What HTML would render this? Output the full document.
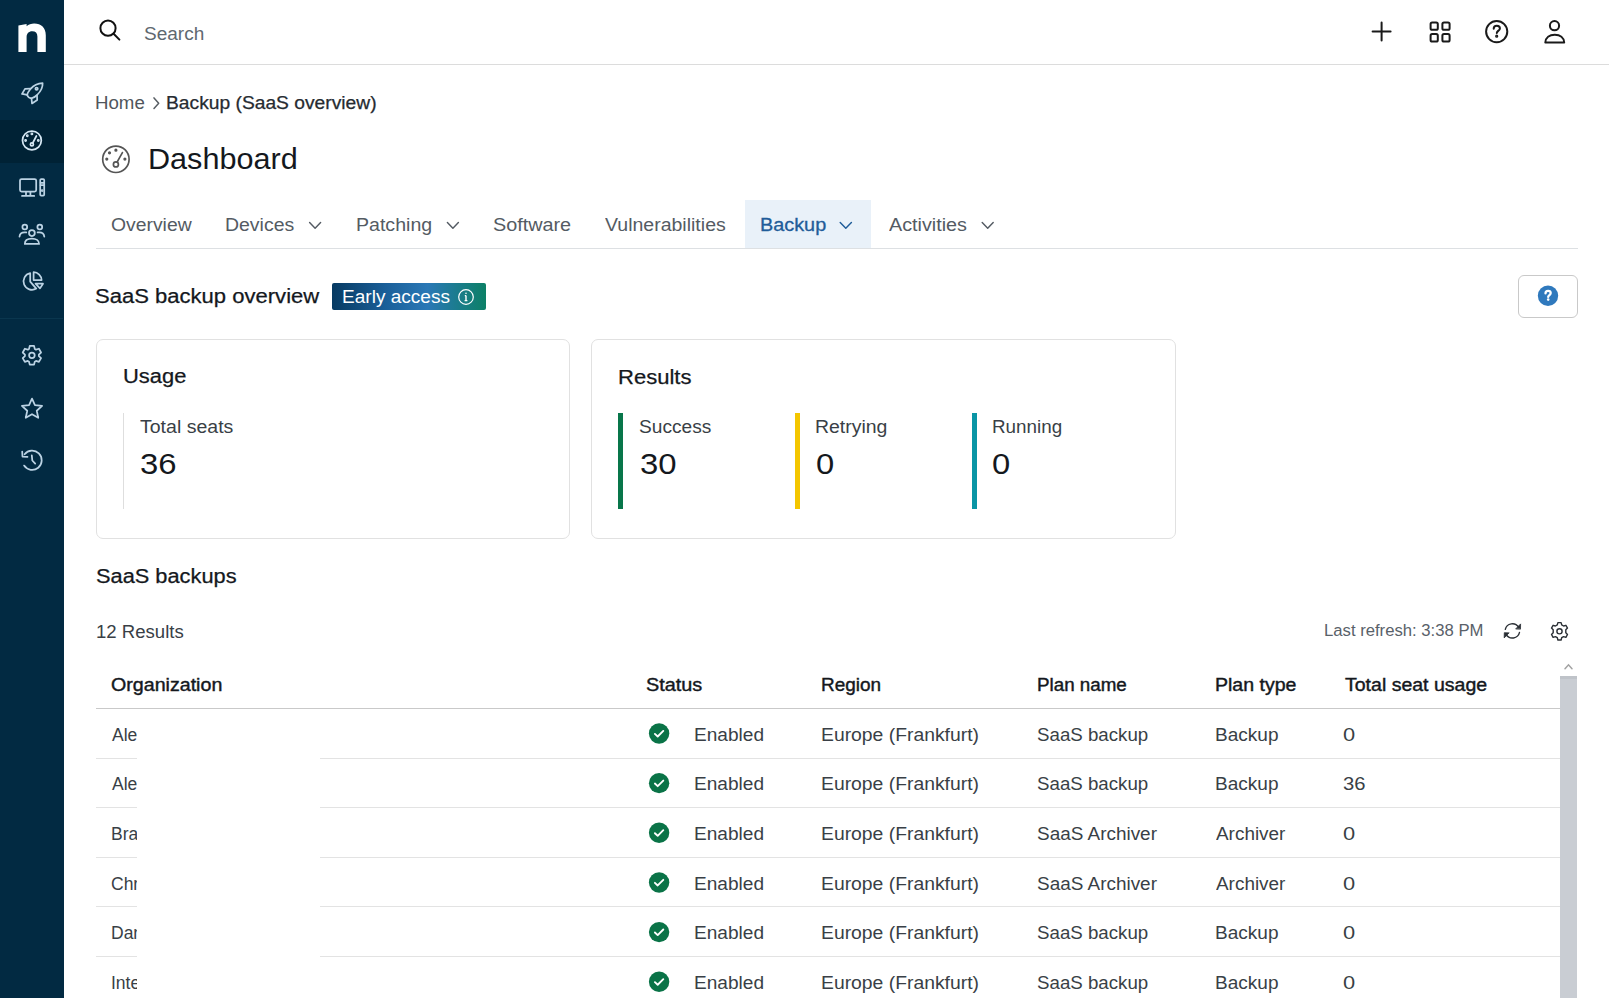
<!DOCTYPE html>
<html><head><meta charset="utf-8"><title>Dashboard</title>
<style>
html,body{margin:0;padding:0;}
body{width:1609px;height:998px;overflow:hidden;background:#ffffff;position:relative;font-family:"Liberation Sans",sans-serif;}
.t{position:absolute;white-space:nowrap;transform-origin:0 0;font-family:"Liberation Sans",sans-serif;}
.a{position:absolute;}
svg{position:absolute;overflow:visible;}
</style></head><body>
<!-- sidebar -->
<div class="a" style="left:0;top:0;width:64px;height:998px;background:#022a42"></div>
<div class="a" style="left:0;top:120px;width:64px;height:43px;background:#002235"></div>
<div class="a" style="left:0;top:318px;width:63px;height:1px;background:#0a364e"></div>
<svg style="left:0;top:0" width="64" height="64" viewBox="0 0 64 64">
 <path fill="#ffffff" d="M18.4 25.6 L26.6 23.9 L26.6 26.3 C28.6 24.6 31.2 23.6 34.2 23.6 C41.2 23.6 45.8 27.8 45.8 35.2 L45.8 52 L37.4 52 L37.4 36.4 C37.4 33.2 35.6 31.3 32.2 31.3 C28.7 31.3 26.6 33.6 26.6 37.2 L26.6 52 L18.4 52 Z"/>
</svg>
<svg style="left:0;top:64px" width="64" height="440" viewBox="0 64 64 440" fill="none" stroke="#bcd3e4" stroke-width="1.75" stroke-linecap="round" stroke-linejoin="round">
 <!-- rocket -->
 <path d="M42.6 83.1 C38 83.4 33.6 85.4 30.6 88.8 C28.7 91.2 27.4 93.3 27.1 95 C27.8 96.9 29.5 98.2 31.4 98.3 C33.1 98.1 35.1 96.9 37.1 95 C40.5 91.6 42.9 87.4 42.6 83.1 Z"/>
 <circle cx="36.6" cy="88.7" r="1.2"/>
 <path d="M30.4 88.6 L25 88.9 L22 93.9 L27.3 94.8"/>
 <path d="M37 95.3 L37.2 99.9 L32 103.4 L31.5 98.3"/>
 <!-- gauge -->
 <g stroke="#d6e8f4">
 <circle cx="31.9" cy="140.4" r="9.4"/>
 <circle cx="31.9" cy="144.4" r="1.5"/>
 <path d="M32.8 142.9 L36.4 136"/>
 <circle cx="27.3" cy="135.7" r="0.55" fill="#d6e8f4"/>
 <circle cx="31.9" cy="133.9" r="0.55" fill="#d6e8f4"/>
 <circle cx="25.6" cy="140.5" r="0.55" fill="#d6e8f4"/>
 <circle cx="38.3" cy="140.5" r="0.55" fill="#d6e8f4"/>
 </g>
 <!-- devices -->
 <rect x="20" y="179" width="16.2" height="12.6" rx="1.6"/>
 <path d="M26 191.8 L26 195.6 M30.4 191.8 L30.4 195.6 M22 195.9 L34.2 195.9"/>
 <rect x="40.2" y="179" width="4" height="16.6" rx="1"/>
 <path d="M40.6 182.8 L43.8 182.8 M40.6 185.2 L43.8 185.2"/>
 <circle cx="42.1" cy="190.6" r="0.5" fill="#bcd3e4"/>
 <!-- people -->
 <circle cx="24.8" cy="227" r="2.4"/>
 <circle cx="39.8" cy="227" r="2.4"/>
 <circle cx="31.9" cy="233.1" r="2.9"/>
 <path d="M19.5 236.6 C19.8 234 21.8 232.4 24.5 232.4 L26.3 232.4"/>
 <path d="M44.3 236.6 C44 234 42 232.4 39.3 232.4 L37.6 232.4"/>
 <path d="M24.8 243.9 C24.8 240.5 27.8 238.6 31.9 238.6 C36 238.6 39.1 240.5 39.1 243.9 Z"/>
 <!-- pie -->
 <path d="M30.2 273.2 A8.4 8.4 0 1 0 36.3 288.6 L30.2 281.6 Z"/>
 <path d="M33.6 272.2 A8 8 0 0 1 41.6 280.1 L33.6 280.1 Z"/>
 <path d="M35.5 283.7 L43 283.7 L40 288.4 Z"/>
 <!-- gear -->
 <path d="M29.05 348.91 L29.74 345.95 L34.06 345.95 L34.75 348.91 L36.01 349.64 L38.92 348.75 L41.08 352.49 L38.86 354.57 L38.86 356.03 L41.08 358.11 L38.92 361.85 L36.01 360.96 L34.75 361.69 L34.06 364.65 L29.74 364.65 L29.05 361.69 L27.79 360.96 L24.88 361.85 L22.72 358.11 L24.94 356.03 L24.94 354.57 L22.72 352.49 L24.88 348.75 L27.79 349.64 Z"/>
 <circle cx="31.9" cy="355.3" r="2.8"/>
 <!-- star -->
 <path d="M32.00 398.60 L34.94 405.15 L42.08 405.92 L36.76 410.75 L38.23 417.78 L32.00 414.20 L25.77 417.78 L27.24 410.75 L21.92 405.92 L29.06 405.15 Z"/>
 <!-- history -->
 <path d="M24.6 454.3 A9.6 9.6 0 1 1 24.1 465.6"/>
 <path d="M22.2 451.6 L22.5 456.6 L27.5 456.9"/>
 <path d="M31.8 455.4 L32.3 460.5 L35.2 463.6"/>
</svg>

<!-- header -->
<div class="a" style="left:64px;top:64px;width:1545px;height:1px;background:#dcdcdc"></div>
<svg style="left:96px;top:16px" width="28" height="28" viewBox="0 0 28 28" fill="none" stroke="#111" stroke-width="2" stroke-linecap="round">
 <circle cx="12" cy="12.2" r="7.6"/>
 <path d="M17.6 17.8 L23.4 23.6"/>
</svg>
<svg style="left:1360px;top:10px" width="220" height="44" viewBox="1360 10 220 44" fill="none" stroke="#1a1a1a" stroke-width="2" stroke-linecap="round" stroke-linejoin="round">
 <path d="M1381.6 22.6 L1381.6 40.6 M1372.6 31.6 L1390.6 31.6"/>
 <rect x="1430.6" y="22.4" width="7.2" height="7.4" rx="1.6"/>
 <rect x="1442.4" y="22.4" width="7.2" height="7.4" rx="1.6"/>
 <rect x="1430.6" y="34.1" width="7.2" height="7.4" rx="1.6"/>
 <rect x="1442.4" y="34.1" width="7.2" height="7.4" rx="1.6"/>
 <circle cx="1496.7" cy="31.6" r="10.6"/>
 <path d="M1493.7 28.7 C1493.7 26.8 1495 25.8 1496.8 25.8 C1498.7 25.8 1499.9 26.9 1499.9 28.4 C1499.9 30.4 1497 30.8 1496.8 33"/>
 <circle cx="1496.7" cy="36.2" r="0.6" fill="#1a1a1a"/>
 <circle cx="1554.5" cy="25.7" r="4.6"/>
 <path d="M1545.3 42.6 C1545.6 37.6 1549.4 34.8 1554.8 34.8 C1560.1 34.8 1563.9 37.6 1564.2 42.6 Z"/>
</svg>

<!-- breadcrumb chevron -->
<svg style="left:150px;top:94px" width="14" height="18" viewBox="0 0 14 18" fill="none" stroke="#585e64" stroke-width="1.5" stroke-linecap="round" stroke-linejoin="round">
 <path d="M4 3.9 L8.7 9.2 L4 14.4"/>
</svg>
<!-- title icon -->
<svg style="left:96px;top:140px" width="40" height="40" viewBox="96 140 40 40" fill="none" stroke="#555555" stroke-width="1.7" stroke-linecap="round">
 <circle cx="115.9" cy="159.3" r="13.2"/>
 <circle cx="115.9" cy="164.4" r="2.5"/>
 <path d="M117.2 161.9 L122.4 152.6"/>
 <circle cx="109.5" cy="152.8" r="0.75" fill="#555555"/>
 <circle cx="115.9" cy="150.2" r="0.75" fill="#555555"/>
 <circle cx="106.8" cy="159.1" r="0.75" fill="#555555"/>
 <circle cx="124.9" cy="159.1" r="0.75" fill="#555555"/>
</svg>

<!-- tabs -->
<div class="a" style="left:745px;top:200px;width:126px;height:48px;background:#e9f1f9"></div>
<div class="a" style="left:96px;top:248px;width:1482px;height:1px;background:#dde0e3"></div>
<svg style="left:300px;top:210px" width="720" height="30" viewBox="300 210 720 30" fill="none" stroke-width="1.45" stroke-linecap="round" stroke-linejoin="round">
 <path d="M309.6 222.6 L315.1 228.2 L320.6 222.6" stroke="#545b63"/>
 <path d="M447.4 222.6 L452.9 228.2 L458.4 222.6" stroke="#545b63"/>
 <path d="M840.2 222.6 L845.8 228.2 L851.4 222.6" stroke="#1f5c99"/>
 <path d="M982.2 222.6 L987.7 228.2 L993.2 222.6" stroke="#545b63"/>
</svg>

<!-- early access badge -->
<div class="a" style="left:332px;top:283px;width:154px;height:27px;border-radius:2px;background:linear-gradient(90deg,#073a62 0%,#1a5f99 35%,#2a78b6 62%,#0c8066 100%)"></div>
<svg style="left:456px;top:287px" width="20" height="20" viewBox="0 0 20 20" fill="none" stroke="#ffffff" stroke-width="1.2">
 <circle cx="10" cy="10" r="7.3"/>
 <path d="M10 8.6 L10 13.6 M8.6 13.6 L11.4 13.6 M8.8 8.6 L10 8.6" stroke-width="1.4"/>
 <circle cx="10" cy="6.3" r="0.8" fill="#ffffff" stroke="none"/>
</svg>

<!-- help button -->
<div class="a" style="left:1518px;top:275px;width:60px;height:43px;box-sizing:border-box;border:1px solid #c9c9c9;border-radius:6px;background:#fff"></div>
<svg style="left:1536px;top:284px" width="24" height="24" viewBox="0 0 24 24">
 <circle cx="12" cy="11.8" r="10.2" fill="#2f79bd"/>
 <path d="M9.5 9.4 C9.5 7.7 10.6 6.9 12.1 6.9 C13.7 6.9 14.7 7.8 14.7 9.1 C14.7 10.9 12.4 11.1 12.2 12.9" fill="none" stroke="#fff" stroke-width="2.3" stroke-linecap="round"/>
 <circle cx="12.2" cy="15.6" r="1.3" fill="#fff"/>
</svg>

<!-- cards -->
<div class="a" style="left:96px;top:339px;width:474px;height:200px;box-sizing:border-box;border:1px solid #e1e1e1;border-radius:7px"></div>
<div class="a" style="left:591px;top:339px;width:585px;height:200px;box-sizing:border-box;border:1px solid #e1e1e1;border-radius:7px"></div>
<div class="a" style="left:123px;top:413px;width:1px;height:96px;background:#dedede"></div>
<div class="a" style="left:618px;top:413px;width:5px;height:96px;background:#08764a"></div>
<div class="a" style="left:795px;top:413px;width:5px;height:96px;background:#f4c600"></div>
<div class="a" style="left:972px;top:413px;width:5px;height:96px;background:#0a95a5"></div>

<!-- refresh / gear -->
<svg style="left:1500px;top:618px" width="76" height="28" viewBox="1500 618 76 28" fill="none" stroke="#2a2f35" stroke-width="1.4" stroke-linecap="round" stroke-linejoin="round">
 <path d="M1505.3 629.4 A7.3 7.3 0 0 1 1518.6 627.2"/>
 <path d="M1519.5 632.4 A7.3 7.3 0 0 1 1506.2 634.6"/>
 <path d="M1515.9 628.7 L1520.6 623.9 L1520.5 628.8 Z" fill="#2a2f35" stroke-width="0.8"/>
 <path d="M1508.9 633.1 L1504.2 637.9 L1504.3 633 Z" fill="#2a2f35" stroke-width="0.8"/>
 <path d="M1557.9 622.6 L1561.1 622.6 L1561.7 624.9 L1563.6 626 L1565.9 625.3 L1567.5 628.1 L1565.8 629.8 L1565.8 632.8 L1567.5 634.5 L1565.9 637.3 L1563.6 636.6 L1561.7 637.7 L1561.1 640 L1557.9 640 L1557.3 637.7 L1555.4 636.6 L1553.1 637.3 L1551.5 634.5 L1553.2 632.8 L1553.2 629.8 L1551.5 628.1 L1553.1 625.3 L1555.4 626 L1557.3 624.9 Z"/>
 <circle cx="1559.5" cy="631.3" r="2.6"/>
</svg>

<!-- table -->
<div class="a" style="left:96px;top:708px;width:1464px;height:1px;background:#c9c9c9"></div>
<div class="a" style="left:96px;top:758px;width:1464px;height:1px;background:#e3e3e3"></div>
<div class="a" style="left:96px;top:807px;width:1464px;height:1px;background:#e3e3e3"></div>
<div class="a" style="left:96px;top:857px;width:1464px;height:1px;background:#e3e3e3"></div>
<div class="a" style="left:96px;top:906px;width:1464px;height:1px;background:#e3e3e3"></div>
<div class="a" style="left:96px;top:956px;width:1464px;height:1px;background:#e3e3e3"></div>
<svg style="left:640px;top:700px" width="40" height="298" viewBox="640 700 40 298">
 <g id="chk">
 <circle cx="659.1" cy="733.5" r="10.2" fill="#0a7347"/>
 <path d="M654.9 733.9 L657.7 736.5 L663.3 730.9" fill="none" stroke="#fff" stroke-width="1.9" stroke-linecap="round" stroke-linejoin="round"/>
 </g>
 <use href="#chk" y="49.65"/>
 <use href="#chk" y="99.3"/>
 <use href="#chk" y="148.95"/>
 <use href="#chk" y="198.6"/>
 <use href="#chk" y="248.25"/>
</svg>

<!-- scrollbar -->
<div class="a" style="left:1560px;top:676px;width:17px;height:322px;background:#c9cdd3"></div>
<div class="a" style="left:1560px;top:676px;width:17px;height:3px;background:#bfc3c9"></div>
<svg style="left:1560px;top:658px" width="17" height="16" viewBox="0 0 17 16" fill="none" stroke="#a3a3a3" stroke-width="1.5" stroke-linecap="round">
 <path d="M5 10.8 L8.5 6.8 L12 10.8"/>
</svg>

<div class="t" style="left:143.71px;top:26.20px;font-size:17.5px;line-height:17.5px;font-weight:400;transform:scaleX(1.0868);color:#5f6870;">Search</div>
<div class="t" style="left:95.33px;top:95.10px;font-size:17.5px;line-height:17.5px;font-weight:400;transform:scaleX(1.0668);color:#50565c;">Home</div>
<div class="t" style="left:165.50px;top:95.20px;font-size:17.5px;line-height:17.5px;font-weight:400;transform:scaleX(1.0990);color:#262b31;-webkit-text-stroke:0.25px #262b31">Backup (SaaS overview)</div>
<div class="t" style="left:147.89px;top:145.10px;font-size:29px;line-height:29px;font-weight:400;transform:scaleX(1.0551);color:#14181d;">Dashboard</div>
<div class="t" style="left:110.89px;top:216.90px;font-size:17.5px;line-height:17.5px;font-weight:400;transform:scaleX(1.1056);color:#545b63;">Overview</div>
<div class="t" style="left:224.89px;top:216.90px;font-size:17.5px;line-height:17.5px;font-weight:400;transform:scaleX(1.1115);color:#545b63;">Devices</div>
<div class="t" style="left:356.28px;top:216.90px;font-size:17.5px;line-height:17.5px;font-weight:400;transform:scaleX(1.1183);color:#545b63;">Patching</div>
<div class="t" style="left:493.47px;top:216.90px;font-size:17.5px;line-height:17.5px;font-weight:400;transform:scaleX(1.1314);color:#545b63;">Software</div>
<div class="t" style="left:605.40px;top:216.90px;font-size:17.5px;line-height:17.5px;font-weight:400;transform:scaleX(1.1148);color:#545b63;">Vulnerabilities</div>
<div class="t" style="left:888.80px;top:216.90px;font-size:17.5px;line-height:17.5px;font-weight:400;transform:scaleX(1.1295);color:#545b63;">Activities</div>
<div class="t" style="left:760.07px;top:216.90px;font-size:17.5px;line-height:17.5px;font-weight:400;transform:scaleX(1.1334);color:#1f5c99;-webkit-text-stroke:0.3px #1f5c99">Backup</div>
<div class="t" style="left:95.30px;top:286.00px;font-size:20px;line-height:20px;font-weight:400;transform:scaleX(1.1020);color:#14181d;-webkit-text-stroke:0.25px #14181d">SaaS backup overview</div>
<div class="t" style="left:342.41px;top:289.30px;font-size:17.5px;line-height:17.5px;font-weight:400;transform:scaleX(1.0888);color:#ffffff;">Early access</div>
<div class="t" style="left:123.01px;top:366.00px;font-size:20px;line-height:20px;font-weight:400;transform:scaleX(1.0956);color:#14181d;-webkit-text-stroke:0.25px #14181d">Usage</div>
<div class="t" style="left:140.00px;top:419.20px;font-size:17.5px;line-height:17.5px;font-weight:400;transform:scaleX(1.1157);color:#393f46;">Total seats</div>
<div class="t" style="left:139.87px;top:449.80px;font-size:29px;line-height:29px;font-weight:400;transform:scaleX(1.1333);color:#14181d;">36</div>
<div class="t" style="left:618.20px;top:366.90px;font-size:20px;line-height:20px;font-weight:400;transform:scaleX(1.1007);color:#14181d;-webkit-text-stroke:0.25px #14181d">Results</div>
<div class="t" style="left:638.91px;top:419.30px;font-size:17.5px;line-height:17.5px;font-weight:400;transform:scaleX(1.0924);color:#393f46;">Success</div>
<div class="t" style="left:640.07px;top:449.80px;font-size:29px;line-height:29px;font-weight:400;transform:scaleX(1.1336);color:#14181d;">30</div>
<div class="t" style="left:815.49px;top:419.30px;font-size:17.5px;line-height:17.5px;font-weight:400;transform:scaleX(1.1113);color:#393f46;">Retrying</div>
<div class="t" style="left:816.27px;top:449.80px;font-size:29px;line-height:29px;font-weight:400;transform:scaleX(1.1286);color:#14181d;">0</div>
<div class="t" style="left:991.72px;top:419.10px;font-size:17.5px;line-height:17.5px;font-weight:400;transform:scaleX(1.0763);color:#393f46;">Running</div>
<div class="t" style="left:992.27px;top:450.20px;font-size:29px;line-height:29px;font-weight:400;transform:scaleX(1.1286);color:#14181d;">0</div>
<div class="t" style="left:95.91px;top:565.90px;font-size:20px;line-height:20px;font-weight:400;transform:scaleX(1.0898);color:#14181d;-webkit-text-stroke:0.25px #14181d">SaaS backups</div>
<div class="t" style="left:95.94px;top:624.10px;font-size:17.5px;line-height:17.5px;font-weight:400;transform:scaleX(1.0617);color:#393f46;">12 Results</div>
<div class="t" style="left:1324.37px;top:622.30px;font-size:16.25px;line-height:16.25px;font-weight:400;transform:scaleX(1.0262);color:#596169;">Last refresh: 3:38 PM</div>
<div class="t" style="left:111.48px;top:677.00px;font-size:17.5px;line-height:17.5px;font-weight:400;transform:scaleX(1.1219);color:#14181d;-webkit-text-stroke:0.4px #14181d">Organization</div>
<div class="t" style="left:646.27px;top:677.00px;font-size:17.5px;line-height:17.5px;font-weight:400;transform:scaleX(1.1336);color:#14181d;-webkit-text-stroke:0.4px #14181d">Status</div>
<div class="t" style="left:820.92px;top:677.00px;font-size:17.5px;line-height:17.5px;font-weight:400;transform:scaleX(1.0832);color:#14181d;-webkit-text-stroke:0.4px #14181d">Region</div>
<div class="t" style="left:1036.73px;top:677.00px;font-size:17.5px;line-height:17.5px;font-weight:400;transform:scaleX(1.0733);color:#14181d;-webkit-text-stroke:0.4px #14181d">Plan name</div>
<div class="t" style="left:1214.68px;top:677.00px;font-size:17.5px;line-height:17.5px;font-weight:400;transform:scaleX(1.1158);color:#14181d;-webkit-text-stroke:0.4px #14181d">Plan type</div>
<div class="t" style="left:1344.60px;top:677.00px;font-size:17.5px;line-height:17.5px;font-weight:400;transform:scaleX(1.1150);color:#14181d;-webkit-text-stroke:0.4px #14181d">Total seat usage</div>
<div class="t" style="left:112.00px;top:726.60px;font-size:17.5px;line-height:17.5px;font-weight:400;transform:scaleX(1.0000);color:#393f46;">Ale</div>
<div class="t" style="left:693.71px;top:726.60px;font-size:17.5px;line-height:17.5px;font-weight:400;transform:scaleX(1.0903);color:#393f46;">Enabled</div>
<div class="t" style="left:820.90px;top:726.60px;font-size:17.5px;line-height:17.5px;font-weight:400;transform:scaleX(1.1050);color:#393f46;">Europe (Frankfurt)</div>
<div class="t" style="left:1036.93px;top:726.60px;font-size:17.5px;line-height:17.5px;font-weight:400;transform:scaleX(1.0687);color:#393f46;">SaaS backup</div>
<div class="t" style="left:1214.71px;top:726.60px;font-size:17.5px;line-height:17.5px;font-weight:400;transform:scaleX(1.0877);color:#393f46;">Backup</div>
<div class="t" style="left:1343.15px;top:726.60px;font-size:17.5px;line-height:17.5px;font-weight:400;transform:scaleX(1.2500);color:#393f46;">0</div>
<div class="t" style="left:112.00px;top:776.25px;font-size:17.5px;line-height:17.5px;font-weight:400;transform:scaleX(1.0000);color:#393f46;">Ale</div>
<div class="t" style="left:693.71px;top:776.25px;font-size:17.5px;line-height:17.5px;font-weight:400;transform:scaleX(1.0903);color:#393f46;">Enabled</div>
<div class="t" style="left:820.90px;top:776.25px;font-size:17.5px;line-height:17.5px;font-weight:400;transform:scaleX(1.1050);color:#393f46;">Europe (Frankfurt)</div>
<div class="t" style="left:1036.93px;top:776.25px;font-size:17.5px;line-height:17.5px;font-weight:400;transform:scaleX(1.0687);color:#393f46;">SaaS backup</div>
<div class="t" style="left:1214.71px;top:776.25px;font-size:17.5px;line-height:17.5px;font-weight:400;transform:scaleX(1.0877);color:#393f46;">Backup</div>
<div class="t" style="left:1343.24px;top:776.25px;font-size:17.5px;line-height:17.5px;font-weight:400;transform:scaleX(1.1556);color:#393f46;">36</div>
<div class="t" style="left:111.00px;top:825.90px;font-size:17.5px;line-height:17.5px;font-weight:400;transform:scaleX(1.0000);color:#393f46;">Bra</div>
<div class="t" style="left:693.71px;top:825.90px;font-size:17.5px;line-height:17.5px;font-weight:400;transform:scaleX(1.0903);color:#393f46;">Enabled</div>
<div class="t" style="left:820.90px;top:825.90px;font-size:17.5px;line-height:17.5px;font-weight:400;transform:scaleX(1.1050);color:#393f46;">Europe (Frankfurt)</div>
<div class="t" style="left:1036.92px;top:825.90px;font-size:17.5px;line-height:17.5px;font-weight:400;transform:scaleX(1.0818);color:#393f46;">SaaS Archiver</div>
<div class="t" style="left:1215.80px;top:825.90px;font-size:17.5px;line-height:17.5px;font-weight:400;transform:scaleX(1.0813);color:#393f46;">Archiver</div>
<div class="t" style="left:1343.15px;top:825.90px;font-size:17.5px;line-height:17.5px;font-weight:400;transform:scaleX(1.2500);color:#393f46;">0</div>
<div class="t" style="left:111.00px;top:875.55px;font-size:17.5px;line-height:17.5px;font-weight:400;transform:scaleX(1.0000);color:#393f46;">Chr</div>
<div class="t" style="left:693.71px;top:875.55px;font-size:17.5px;line-height:17.5px;font-weight:400;transform:scaleX(1.0903);color:#393f46;">Enabled</div>
<div class="t" style="left:820.90px;top:875.55px;font-size:17.5px;line-height:17.5px;font-weight:400;transform:scaleX(1.1050);color:#393f46;">Europe (Frankfurt)</div>
<div class="t" style="left:1036.92px;top:875.55px;font-size:17.5px;line-height:17.5px;font-weight:400;transform:scaleX(1.0818);color:#393f46;">SaaS Archiver</div>
<div class="t" style="left:1215.80px;top:875.55px;font-size:17.5px;line-height:17.5px;font-weight:400;transform:scaleX(1.0813);color:#393f46;">Archiver</div>
<div class="t" style="left:1343.15px;top:875.55px;font-size:17.5px;line-height:17.5px;font-weight:400;transform:scaleX(1.2500);color:#393f46;">0</div>
<div class="t" style="left:111.00px;top:925.20px;font-size:17.5px;line-height:17.5px;font-weight:400;transform:scaleX(1.0000);color:#393f46;">Dan</div>
<div class="t" style="left:693.71px;top:925.20px;font-size:17.5px;line-height:17.5px;font-weight:400;transform:scaleX(1.0903);color:#393f46;">Enabled</div>
<div class="t" style="left:820.90px;top:925.20px;font-size:17.5px;line-height:17.5px;font-weight:400;transform:scaleX(1.1050);color:#393f46;">Europe (Frankfurt)</div>
<div class="t" style="left:1036.93px;top:925.20px;font-size:17.5px;line-height:17.5px;font-weight:400;transform:scaleX(1.0687);color:#393f46;">SaaS backup</div>
<div class="t" style="left:1214.71px;top:925.20px;font-size:17.5px;line-height:17.5px;font-weight:400;transform:scaleX(1.0877);color:#393f46;">Backup</div>
<div class="t" style="left:1343.15px;top:925.20px;font-size:17.5px;line-height:17.5px;font-weight:400;transform:scaleX(1.2500);color:#393f46;">0</div>
<div class="t" style="left:111.00px;top:974.85px;font-size:17.5px;line-height:17.5px;font-weight:400;transform:scaleX(1.0000);color:#393f46;">Inte</div>
<div class="t" style="left:693.71px;top:974.85px;font-size:17.5px;line-height:17.5px;font-weight:400;transform:scaleX(1.0903);color:#393f46;">Enabled</div>
<div class="t" style="left:820.90px;top:974.85px;font-size:17.5px;line-height:17.5px;font-weight:400;transform:scaleX(1.1050);color:#393f46;">Europe (Frankfurt)</div>
<div class="t" style="left:1036.93px;top:974.85px;font-size:17.5px;line-height:17.5px;font-weight:400;transform:scaleX(1.0687);color:#393f46;">SaaS backup</div>
<div class="t" style="left:1214.71px;top:974.85px;font-size:17.5px;line-height:17.5px;font-weight:400;transform:scaleX(1.0877);color:#393f46;">Backup</div>
<div class="t" style="left:1343.15px;top:974.85px;font-size:17.5px;line-height:17.5px;font-weight:400;transform:scaleX(1.2500);color:#393f46;">0</div>

<!-- redaction cover -->
<div class="a" style="left:137px;top:709px;width:183px;height:289px;background:#ffffff"></div>
</body></html>
